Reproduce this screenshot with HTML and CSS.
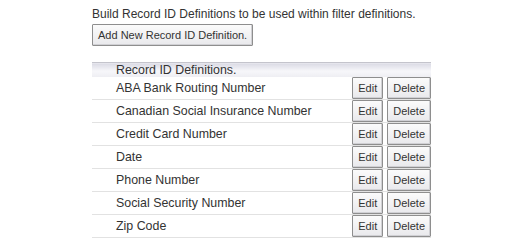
FILE: index.html
```html
<!DOCTYPE html>
<html>
	<head>
		<link rel="stylesheet" href="styles.css">
	</head>
	<body>
		<div id="container">
			<p class="intro">Build Record ID Definitions to be used within filter definitions.</p>
			<button class="buton add">Add New Record ID Definition.</button>
			<table class="defs">
				<thead>
					<tr>
						<td colspan="3">Record ID Definitions.</td>
					</tr>
				</thead>
				<tbody>
					<tr>
						<td class="name">ABA Bank Routing Number</td>
						<td class="act"><button class="buton">Edit</button></td>
						<td class="act"><button class="buton">Delete</button></td>
					</tr>
					<tr>
						<td class="name">Canadian Social Insurance Number</td>
						<td class="act"><button class="buton">Edit</button></td>
						<td class="act"><button class="buton">Delete</button></td>
					</tr>
					<tr>
						<td class="name">Credit Card Number</td>
						<td class="act"><button class="buton">Edit</button></td>
						<td class="act"><button class="buton">Delete</button></td>
					</tr>
					<tr>
						<td class="name">Date</td>
						<td class="act"><button class="buton">Edit</button></td>
						<td class="act"><button class="buton">Delete</button></td>
					</tr>
					<tr>
						<td class="name">Phone Number</td>
						<td class="act"><button class="buton">Edit</button></td>
						<td class="act"><button class="buton">Delete</button></td>
					</tr>
					<tr>
						<td class="name">Social Security Number</td>
						<td class="act"><button class="buton">Edit</button></td>
						<td class="act"><button class="buton">Delete</button></td>
					</tr>
					<tr>
						<td class="name">Zip Code</td>
						<td class="act"><button class="buton">Edit</button></td>
						<td class="act"><button class="buton">Delete</button></td>
					</tr>
				</tbody>
			</table>
		</div>
	</body>
</html>
```

FILE: styles.css
```css
body {
	margin: 0;
	background-color: white;
	font-family: "Liberation Sans", Arial, sans-serif;
	font-size: 11px;
	color: #333;
}
#container {
	padding: 8px 0 0 92px;
	width: 339px;
}
.intro {
	margin: 0 0 3px 0;
	line-height: 13px;
	font-size: 12px;
}
.buton {
	font-family: "Liberation Sans", Arial, sans-serif;
	font-size: 11px;
	color: #333;
	background: linear-gradient(#fbfbfb, #e9e9ec);
	border: 1px solid #8e8e8e;
	border-radius: 1px;
	box-shadow: inset -1px -1px 0 #d0d0d4;
	padding: 0 5px;
	height: 22px;
	vertical-align: top;
}
.add {
	height: 22px;
	padding: 0 5px;
	margin-bottom: 16px;
	font-size: 11px;
}
.defs {
	width: 339px;
	border-collapse: collapse;
	font-size: 12.4px;
}
.defs thead td {
	height: 14px;
	padding: 0 0 0 24px;
	border-top: 1px solid #c4c4cc;
	background: linear-gradient(#dadae4, #f7f7fa 55%, #ededf2);
	line-height: 14px;
}
.defs tbody td {
	height: 22px;
	padding: 0;
	border-bottom: 1px solid #e2e2e2;
}
.defs .name {
	padding-left: 24px;
}
.defs .act {
	width: 1px;
	padding-left: 4px;
	white-space: nowrap;
	vertical-align: top;
}
```
